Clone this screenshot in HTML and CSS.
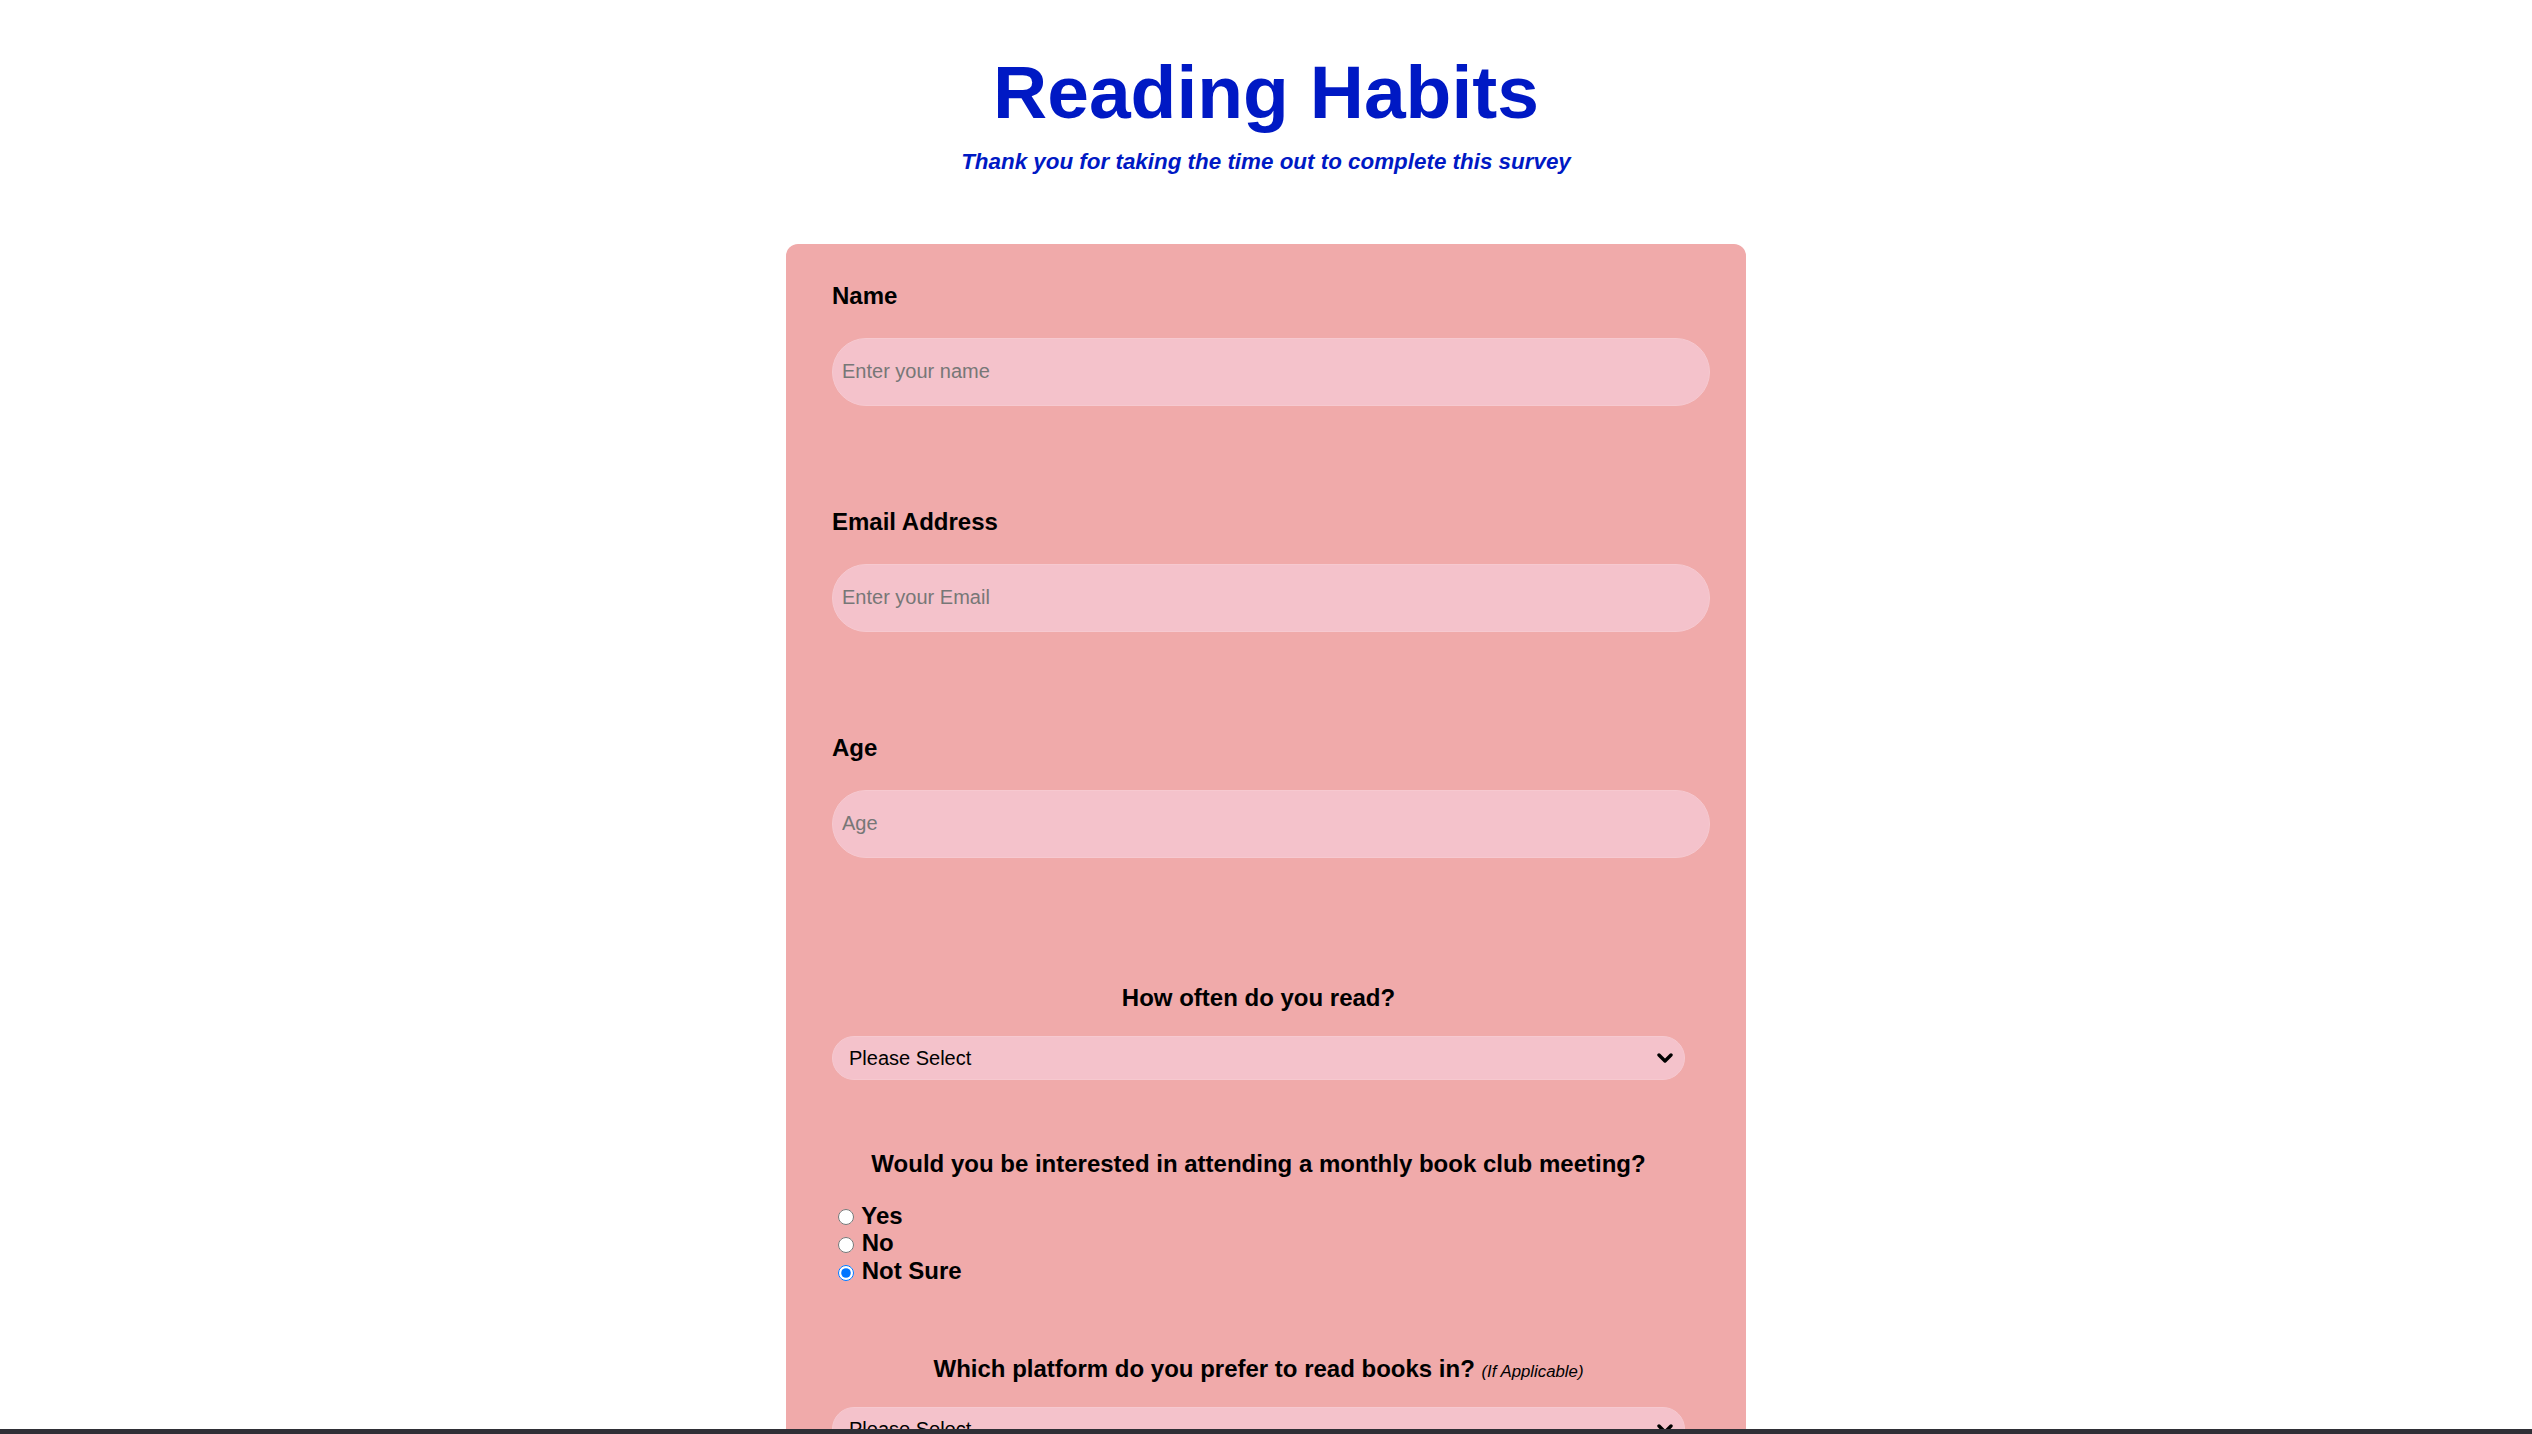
FILE: index.html
```html
<!DOCTYPE html>
<html lang="en">
<head>
<meta charset="utf-8">
<title>Reading Habits Survey</title>
<link rel="stylesheet" href="styles.css">
</head>
<body>
<header class="header">
  <h1 class="title">Reading Habits</h1>
  <p class="subtitle">Thank you for taking the time out to complete this survey</p>
</header>
<main class="card">
  <form class="survey">
    <div class="field">
      <label class="label" for="name">Name</label>
      <input class="text-input" id="name" type="text" placeholder="Enter your name">
    </div>
    <div class="field">
      <label class="label" for="email">Email Address</label>
      <input class="text-input" id="email" type="email" placeholder="Enter your Email">
    </div>
    <div class="field">
      <label class="label" for="age">Age</label>
      <input class="text-input" id="age" type="number" placeholder="Age">
    </div>

    <div class="choice choice--first">
      <p class="question">How often do you read?</p>
      <div class="select-wrap">
        <select class="select">
          <option>Please Select</option>
          <option>Daily</option>
          <option>Weekly</option>
          <option>Monthly</option>
          <option>Rarely</option>
        </select>
        <svg class="chevron" width="16" height="10" viewBox="0 0 16 10" aria-hidden="true"><polyline points="2,2 8,8 14,2" fill="none" stroke="#000" stroke-width="3.4" stroke-linecap="round" stroke-linejoin="round"/></svg>
      </div>
    </div>

    <div class="choice">
      <p class="question">Would you be interested in attending a monthly book club meeting?</p>
      <div class="radios">
        <label class="radio-row"><input class="radio" type="radio" name="club" value="yes"> Yes</label>
        <label class="radio-row"><input class="radio" type="radio" name="club" value="no"> No</label>
        <label class="radio-row"><input class="radio" type="radio" name="club" value="unsure" checked> Not Sure</label>
      </div>
    </div>

    <div class="choice choice--after-radios">
      <p class="question">Which platform do you prefer to read books in? <span class="note">(If Applicable)</span></p>
      <div class="select-wrap">
        <select class="select">
          <option>Please Select</option>
          <option>Paperback</option>
          <option>E-reader</option>
          <option>Audiobook</option>
        </select>
        <svg class="chevron" width="16" height="10" viewBox="0 0 16 10" aria-hidden="true"><polyline points="2,2 8,8 14,2" fill="none" stroke="#000" stroke-width="3.4" stroke-linecap="round" stroke-linejoin="round"/></svg>
      </div>
    </div>
  </form>
</main>
<div class="dock-edge"></div>
</body>
</html>
```

FILE: styles.css
```css
html, body {
  margin: 0;
  padding: 0;
  background: #ffffff;
  overflow: hidden;
}

body {
  font-family: "Liberation Sans", Arial, Helvetica, sans-serif;
  line-height: 1.15;
  color: #000;
}

.header {
  padding-top: 49px;
  text-align: center;
}

.title {
  margin: 0;
  font-size: 75px;
  font-weight: 700;
  line-height: 1.15;
  color: #0019c4;
}

.subtitle {
  margin: 13.5px 0 0;
  font-size: 22.4px;
  font-weight: 700;
  font-style: italic;
  line-height: 1.15;
  color: #0019c4;
}

.card {
  box-sizing: border-box;
  width: 960px;
  margin: 69px auto 0;
  padding: 38.5px 36px 120px 46px;
  background: #f0aaaa;
  border-radius: 12px;
}

.survey {
  margin: 0;
}

.field + .field {
  margin-top: 102px;
}

.label {
  display: block;
  margin-bottom: 28.3px;
  font-size: 24px;
  font-weight: 700;
  line-height: 1.15;
}

.text-input {
  display: block;
  box-sizing: border-box;
  width: 878px;
  height: 68px;
  margin: 0;
  padding: 0 9px;
  border: 1.5px solid #f6c9d0;
  border-radius: 34px;
  background: #f4c2cb;
  font-family: "Liberation Sans", Arial, Helvetica, sans-serif;
  font-size: 20px;
  color: #000;
  outline: none;
}

.text-input::placeholder {
  color: #777777;
}

.choice {
  width: 853px;
  margin-top: 70px;
}

.choice--first {
  margin-top: 126px;
}

.choice--after-radios {
  margin-top: 70.5px;
}

.question {
  margin: 0 0 24.4px;
  font-size: 24px;
  font-weight: 700;
  line-height: 1.15;
  text-align: center;
}

.note {
  font-size: 16.8px;
  font-weight: 400;
  font-style: italic;
}

.select-wrap {
  position: relative;
  width: 853px;
  height: 44px;
}

.select {
  -webkit-appearance: none;
  appearance: none;
  box-sizing: border-box;
  display: block;
  width: 100%;
  height: 44px;
  margin: 0;
  padding: 0 40px 0 16px;
  border: 1px solid #f6c9d0;
  border-radius: 22px;
  background: #f4c2cb;
  font-family: "Liberation Sans", Arial, Helvetica, sans-serif;
  font-size: 20px;
  color: #000;
  outline: none;
}

.chevron {
  position: absolute;
  right: 12px;
  top: 17px;
  pointer-events: none;
}

.radios {
  margin-top: 1px;
}

.radio-row {
  display: block;
  font-size: 24px;
  font-weight: 700;
  line-height: 1.15;
}

.radio {
  width: 16px;
  height: 16px;
  margin: 0 1px 0 6px;
  vertical-align: middle;
}

.dock-edge {
  position: fixed;
  left: 0;
  right: 0;
  bottom: 0;
  height: 5px;
  background: #2f2f36;
}
```
